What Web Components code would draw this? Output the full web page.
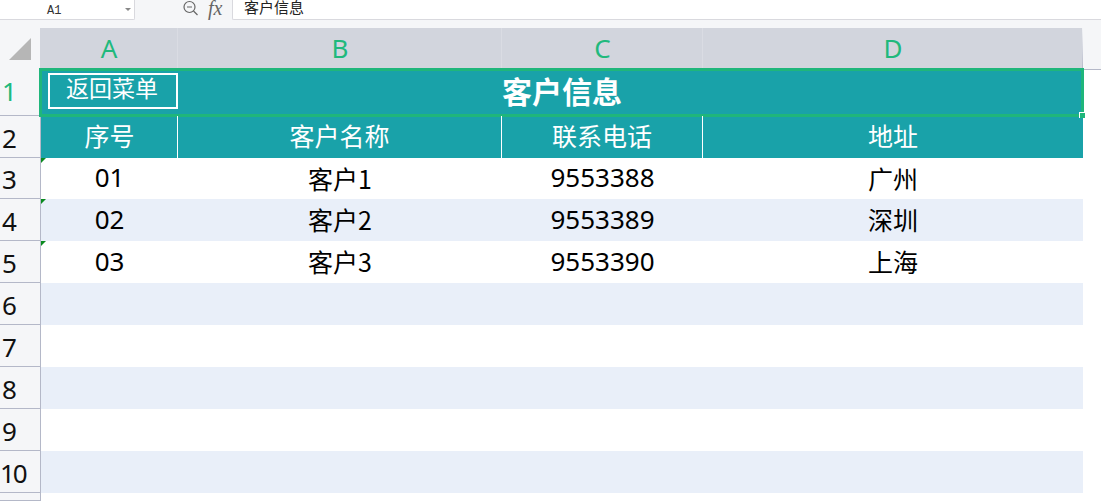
<!DOCTYPE html>
<html>
<head>
  <meta charset="UTF-8">
  <title>客户信息</title>
  <style>
    html, body { margin: 0; height: 501px; overflow: hidden; background: #fff; }
    body { font-family: "Noto Sans CJK SC", "Noto Sans", sans-serif; }
  </style>
  <script type="module">
    class FormulaBar extends HTMLElement {
      constructor() {
        super();
        this.attachShadow({mode: 'open'});
        this.shadowRoot.innerHTML = `
          <style>
            :host { display: flex; height: 20px; background: #f5f6f8; box-sizing: border-box; }
            .name { width: 135px; height: 20px; box-sizing: border-box; background: #fff; border: solid #d9d9de; border-width: 0 1px 1px 0; border-radius: 0 0 2px 0; display: flex; align-items: center; padding: 2px 3px 0 47px; font: 12px "Liberation Mono", monospace; color: #333; }
            .name span { flex: 1; }
            .arrow { width: 0; height: 0; border: 3px solid transparent; border-top: 3px solid #888; margin-top: 1px; }
            .tools { width: 97px; display: flex; align-items: flex-start; padding-left: 47px; gap: 9px; box-sizing: border-box; height: 19px; }
            .fx { font: italic 20px/16px "Liberation Serif", serif; color: #666; }
            .input { flex: 1; height: 20px; box-sizing: border-box; background: #fff; border: solid #d9d9de; border-width: 0 0 1px 1px; border-radius: 0 0 0 2px; padding-left: 11px; font: 15px/13px "Noto Sans CJK SC", sans-serif; color: #222; }
          </style>
          <div class="name"><span>A1</span><i class="arrow"></i></div>
          <div class="tools">
            <svg width="17" height="17" viewBox="0 0 17 17" fill="none" stroke="#666" stroke-width="1.2"><circle cx="7.5" cy="7" r="5.5"/><path d="M5 7h5M11.5 11l4 4"/></svg>
            <span class="fx">fx</span>
          </div>
          <div class="input">客户信息</div>`;
      }
    }

    class ColHeaders extends HTMLElement {
      constructor() {
        super();
        this.attachShadow({mode: 'open'});
        this.shadowRoot.innerHTML = `
          <style>
            :host { display: grid; grid-template-columns: 40px 138px 324px 201px 380px 18px; height: 50px; margin-bottom: -1px; background: #f5f6f8; border-bottom: 1px solid #b4b8c8; box-sizing: border-box; padding-top: 8px; }
            .corner { display: flex; align-items: flex-end; justify-content: flex-end; padding: 0 9px 9px 0; }
            .col { background: #d2d5dd; border-right: 1px solid #dadce3; display: flex; align-items: center; justify-content: center; color: #20b97c; font: 26px "Noto Sans", sans-serif; padding: 0 0 2px 1px; box-sizing: border-box; }
            .col.last { border-right: 1px solid; border-image: linear-gradient(#f5f6f8, #b4b8c8) 1; }
          </style>
          <div class="corner"><svg width="22" height="22" viewBox="0 0 22 22" style="display:block"><path d="M22 0V22H0Z" fill="#b6b6b6"/></svg></div>
          <div class="col">A</div>
          <div class="col">B</div>
          <div class="col">C</div>
          <div class="col last">D</div>
          <i></i>`;
      }
    }

    class SheetRow extends HTMLElement {
      static get observedAttributes() { return ['num']; }
      constructor() {
        super();
        this.attachShadow({mode: 'open'});
        this.shadowRoot.innerHTML = `
          <style>
            :host { display: grid; grid-template-columns: 41px 137px 324px 201px 380px; width: 1083px; height: var(--row-h, 42px); color: #000; background: #fff; font: 25px/1 "Noto Sans CJK SC", sans-serif; }
            :host([alt]) { background: #e9eff9; }
            :host([head]) { background: #19a2a9; color: #fff; }
            .num { background: #f5f6f8; border-right: 1px solid #b4b8c8; border-bottom: 1px solid #b4b8c8; box-sizing: border-box; display: flex; align-items: center; padding: 2px 0 0 2px; overflow: hidden; font: 26px "Noto Sans", sans-serif; color: #111; }
            :host([wide]) .num { padding-left: 0; letter-spacing: -2px; }
            :host([active]) .num { color: #20b97c; padding: 0 0 3px 2px; }
          </style>
          <div class="num"></div>
          <slot></slot>`;
      }
      attributeChangedCallback(name, oldVal, val) {
        this.shadowRoot.querySelector('.num').textContent = val;
      }
    }

    class SheetCell extends HTMLElement {
      constructor() {
        super();
        this.attachShadow({mode: 'open'});
        this.shadowRoot.innerHTML = `
          <style>
            :host { display: flex; align-items: center; justify-content: center; position: relative; font-size: 25px; padding-bottom: 1px; box-sizing: border-box; }
            :host([sep]) { border-right: 1px solid #fff; padding-bottom: 3px; }
            :host([top]) { padding-bottom: 3px; }
            :host([nudge]) { padding-left: 1px; }
            :host([mark])::before { content: ""; position: absolute; left: 0; top: 0; border-top: 5px solid #0a8a1f; border-right: 5px solid transparent; }
            :host([lat]) { font: 26px/1 "Noto Sans", sans-serif; padding-bottom: 3px; }
          </style>
          <slot></slot>`;
      }
    }

    class TitleCell extends HTMLElement {
      constructor() {
        super();
        this.attachShadow({mode: 'open'});
        this.shadowRoot.innerHTML = `
          <style>
            :host { display: flex; align-items: center; justify-content: center; grid-column: 2 / 6; position: relative; color: #fff; font: bold 30px/1 "Noto Sans CJK SC", sans-serif; padding-bottom: 6px; box-sizing: border-box; }
            .frame { position: absolute; left: -2px; top: -1px; right: -1px; bottom: -1px; border: 3px solid #1fb67b; pointer-events: none; }
            .handle { position: absolute; right: -2px; bottom: -2px; width: 5px; height: 5px; background: #1fb67b; border: solid #fff; border-width: 1px 0 0 1px; }
            .btn { position: absolute; left: 7px; top: 4px; width: 130px; height: 36px; box-sizing: border-box; border: 2px solid #fff; display: flex; align-items: center; justify-content: center; font: 23px/1 "Noto Sans CJK SC", sans-serif; padding: 0 2px 7px 0; }
          </style>
          <div class="frame"></div>
          <div class="btn">返回菜单</div>
          <span><slot></slot></span>
          <div class="handle"></div>`;
      }
    }

    customElements.define('formula-bar', FormulaBar);
    customElements.define('col-headers', ColHeaders);
    customElements.define('sheet-row', SheetRow);
    customElements.define('sheet-cell', SheetCell);
    customElements.define('title-cell', TitleCell);
  </script>
</head>
<body>
  <formula-bar></formula-bar>
  <col-headers></col-headers>
  <sheet-row num="1" head active style="--row-h:47px"><title-cell>客户信息</title-cell></sheet-row>
  <sheet-row num="2" head>
    <sheet-cell sep nudge>序号</sheet-cell><sheet-cell sep>客户名称</sheet-cell><sheet-cell sep>联系电话</sheet-cell><sheet-cell top>地址</sheet-cell>
  </sheet-row>
  <sheet-row num="3" style="--row-h:41px">
    <sheet-cell mark lat>01</sheet-cell><sheet-cell>客户1</sheet-cell><sheet-cell lat>9553388</sheet-cell><sheet-cell>广州</sheet-cell>
  </sheet-row>
  <sheet-row num="4" alt>
    <sheet-cell mark lat>02</sheet-cell><sheet-cell>客户2</sheet-cell><sheet-cell lat>9553389</sheet-cell><sheet-cell>深圳</sheet-cell>
  </sheet-row>
  <sheet-row num="5">
    <sheet-cell mark lat>03</sheet-cell><sheet-cell>客户3</sheet-cell><sheet-cell lat>9553390</sheet-cell><sheet-cell>上海</sheet-cell>
  </sheet-row>
  <sheet-row num="6" alt></sheet-row>
  <sheet-row num="7"></sheet-row>
  <sheet-row num="8" alt></sheet-row>
  <sheet-row num="9"></sheet-row>
  <sheet-row num="10" alt wide></sheet-row>
  <sheet-row num="" style="--row-h:8px"></sheet-row>
</body>
</html>
